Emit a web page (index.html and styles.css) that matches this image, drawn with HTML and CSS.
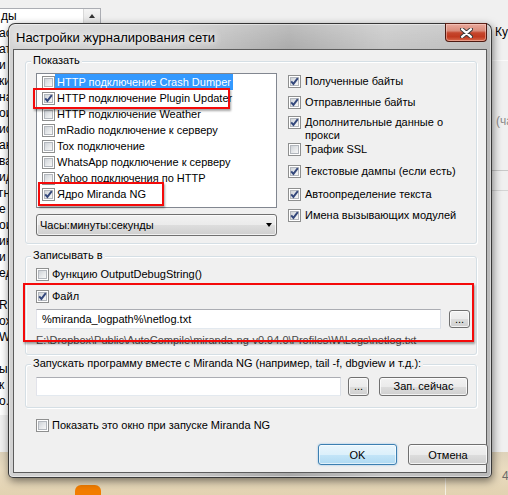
FILE: index.html
```html
<!DOCTYPE html>
<html lang="ru">
<head>
<meta charset="utf-8">
<title>Настройки журналирования сети</title>
<link rel="stylesheet" href="styles.css">
</head>
<body>
<div class="desk">
  <div class="bgtop">
    <span class="bgtop-text">ды</span>
    <span class="bgup"><i></i></span>
  </div>
  <div class="bgstrip">
    <div>ас</div><div>ат</div><div>и</div><div>ки</div><div>на</div><div>ои</div><div>ис</div><div>ан</div>
    <div>ва</div><div>ид</div><div>гн</div><div>е</div><div>ои</div><div>ин</div><div>и</div><div>ед</div>
    <div></div><div>R</div><div>ох</div><div>Wh</div><div></div><div>ы</div><div>к</div><div>о.</div>
  </div>
  <div class="bgright">
    <div class="bgr-kur">Курс</div>
    <div class="bgr-ch">(ча</div>
    <div class="bgr-line l1"></div>
    <div class="bgr-line l2"></div>
    <div class="bgr-line l3"></div>
  </div>
  <div class="bgbottom">
    <div class="bgb-orange"></div>
    <div class="bgb-vline"></div>
    <div class="bgb-four">4</div>
  </div>

  <div class="dialog">
    <div class="titlebar">
      <span class="title">Настройки журналирования сети</span>
      <div class="close">
        <svg width="13" height="10" viewBox="0 0 13 10"><path d="M2 1.2 L11 8.8 M11 1.2 L2 8.8" stroke="#3b3b3b" stroke-width="4.2" stroke-linecap="round"/><path d="M2 1.2 L11 8.8 M11 1.2 L2 8.8" stroke="#ffffff" stroke-width="2.2" stroke-linecap="round"/></svg>
      </div>
    </div>
    <div class="client">
      <div class="group g1">
        <span class="legend">Показать</span>
        <div class="leftcol">
          <div class="listbox">
            <div class="li"><span class="cb"></span><span class="lt sel">HTTP подключение Crash Dumper</span></div>
            <div class="li"><span class="cb on"><svg viewBox="0 0 13 13"><path d="M3.2 6.3 L5.4 8.9 L9.8 3.1" fill="none" stroke="#34487c" stroke-width="1.9"/></svg></span><span class="lt">HTTP подключение Plugin Updater</span></div>
            <div class="li"><span class="cb"></span><span class="lt">HTTP подключение Weather</span></div>
            <div class="li"><span class="cb"></span><span class="lt">mRadio подключение к серверу</span></div>
            <div class="li"><span class="cb"></span><span class="lt">Tox подключение</span></div>
            <div class="li"><span class="cb"></span><span class="lt">WhatsApp подключение к серверу</span></div>
            <div class="li"><span class="cb"></span><span class="lt">Yahoo подключения по HTTP</span></div>
            <div class="li"><span class="cb on"><svg viewBox="0 0 13 13"><path d="M3.2 6.3 L5.4 8.9 L9.8 3.1" fill="none" stroke="#34487c" stroke-width="1.9"/></svg></span><span class="lt">Ядро Miranda NG</span></div>
          </div>
          <div class="combo"><span>Часы:минуты:секунды</span><i class="arrow"></i></div>
        </div>
        <div class="opts">
          <div class="opt"><span class="cb on"><svg viewBox="0 0 13 13"><path d="M3.2 6.3 L5.4 8.9 L9.8 3.1" fill="none" stroke="#34487c" stroke-width="1.9"/></svg></span><span class="t">Полученные байты</span></div>
          <div class="opt"><span class="cb on"><svg viewBox="0 0 13 13"><path d="M3.2 6.3 L5.4 8.9 L9.8 3.1" fill="none" stroke="#34487c" stroke-width="1.9"/></svg></span><span class="t">Отправленные байты</span></div>
          <div class="opt"><span class="cb on"><svg viewBox="0 0 13 13"><path d="M3.2 6.3 L5.4 8.9 L9.8 3.1" fill="none" stroke="#34487c" stroke-width="1.9"/></svg></span><span class="t">Дополнительные данные о<br>прокси</span></div>
          <div class="opt"><span class="cb"></span><span class="t">Трафик SSL</span></div>
          <div class="opt"><span class="cb on"><svg viewBox="0 0 13 13"><path d="M3.2 6.3 L5.4 8.9 L9.8 3.1" fill="none" stroke="#34487c" stroke-width="1.9"/></svg></span><span class="t">Текстовые дампы (если есть)</span></div>
          <div class="opt"><span class="cb on"><svg viewBox="0 0 13 13"><path d="M3.2 6.3 L5.4 8.9 L9.8 3.1" fill="none" stroke="#34487c" stroke-width="1.9"/></svg></span><span class="t">Автоопределение текста</span></div>
          <div class="opt"><span class="cb on"><svg viewBox="0 0 13 13"><path d="M3.2 6.3 L5.4 8.9 L9.8 3.1" fill="none" stroke="#34487c" stroke-width="1.9"/></svg></span><span class="t">Имена вызывающих модулей</span></div>
        </div>
      </div>

      <div class="group g2">
        <span class="legend">Записывать в</span>
        <div class="row r1"><span class="cb"></span><span class="t">Функцию OutputDebugString()</span></div>
        <div class="row r2"><span class="cb on"><svg viewBox="0 0 13 13"><path d="M3.2 6.3 L5.4 8.9 L9.8 3.1" fill="none" stroke="#34487c" stroke-width="1.9"/></svg></span><span class="t">Файл</span></div>
        <div class="row r3"><div class="edit e1">%miranda_logpath%\netlog.txt</div><div class="btn dots">...</div></div>
        <div class="path">E:\Dropbox\Public\AutoCompile\miranda-ng-v0.94.0\Profiles\W\Logs\netlog.txt</div>
      </div>

      <div class="group g3">
        <span class="legend">Запускать программу вместе с Miranda NG (например, tail -f, dbgview и т.д.):</span>
        <div class="row r4"><div class="edit e2"></div><div class="btn dots">...</div><div class="btn run">Зап. сейчас</div></div>
      </div>

      <div class="row showrow"><span class="cb"></span><span class="t">Показать это окно при запуске Miranda NG</span></div>

      <div class="buttons">
        <div class="btn def">OK</div>
        <div class="btn cancel">Отмена</div>
      </div>
    </div>
  </div>

  <div class="mark m1"></div>
  <div class="mark m2"></div>
  <div class="mark m3"></div>
</div>
</body>
</html>
```

FILE: styles.css
```css
* { box-sizing: border-box; }
html, body { margin: 0; padding: 0; }
body {
  width: 508px; height: 495px; overflow: hidden;
  background: #f0f0f0;
  font: 11px "Liberation Sans", Arial, sans-serif;
  color: #000;
}
.desk { position: relative; width: 508px; height: 495px; overflow: hidden; background: #f0f0f0; }

/* background window pieces */
.bgtop {
  position: absolute; left: -1px; top: 8px; width: 102px; height: 40px;
  background: #fff; border: 1px solid #abadb3;
}
.bgtop-text { position: absolute; left: 1px; top: 0; line-height: 14px; font-size: 12px; }
.bgup {
  position: absolute; right: 0; top: 0; width: 17px; height: 14px;
  background: linear-gradient(#f4f4f4, #e4e4e4); border-left: 1px solid #d8d8d8;
}
.bgup i {
  position: absolute; left: 5px; top: 5px; width: 0; height: 0;
  border-left: 3.5px solid transparent; border-right: 3.5px solid transparent; border-bottom: 4px solid #333;
}
.bgstrip {
  position: absolute; left: 0; top: 25px; width: 10px; height: 390px; overflow: hidden;
  background: #fff; font-size: 12px;
}
.bgstrip div { height: 16px; line-height: 16px; margin-left: -1px; white-space: nowrap; }
.bgright { position: absolute; left: 490px; top: 0; width: 18px; height: 495px; }
.bgr-kur { position: absolute; left: 5px; top: 24px; font-size: 12px; line-height: 16px; }
.bgr-ch { position: absolute; left: 6px; top: 114px; font-size: 12px; color: #8c8c8c; line-height: 14px; }
.bgr-line { position: absolute; left: 0; width: 18px; height: 1px; }
.bgr-line.l1 { top: 60px; background: #fafafa; }
.bgr-line.l2 { top: 170px; background: #c8c8c8; }
.bgr-line.l3 { top: 190px; background: #d4d4d4; }
.bgbottom {
  position: absolute; left: 0; right: 0; top: 452px; bottom: 0;
  background: linear-gradient(#ded2ba, #eadcc0 40%, #e2d2b1);
}
.bgb-orange { position: absolute; left: 75px; top: 33px; width: 26px; height: 14px; border-radius: 6px 6px 0 0; background: #f27d00; }
.bgb-vline { position: absolute; left: 445px; top: 26px; width: 1px; height: 20px; background: #f6f0e4; }
.bgb-four { position: absolute; left: 502px; top: 17px; color: #6b6b6b; font-size: 12px; }

/* dialog frame */
.dialog {
  position: absolute; left: 8px; top: 23px; width: 484px; height: 455px;
  border: 1px solid rgba(30, 30, 30, 0.85);
  border-radius: 7px 7px 5px 5px;
  background:
    linear-gradient(rgba(255,255,255,0.25), rgba(255,255,255,0) 30px),
    linear-gradient(90deg, #d2d2d2 0%, #cacaca 35%, #a8a8a8 58%, #c4c4c4 78%, #b9b9b9 100%);
  box-shadow: inset 0 0 0 1px rgba(255,255,255,0.45), 1px 3px 9px rgba(0,0,0,0.5);
  padding: 0 4px 4px 4px;
  display: flex; flex-direction: column;
}
.titlebar { height: 25px; display: flex; align-items: flex-start; flex: none; }
.title {
  margin: 6px 0 0 3px; font: 13px/15px "Liberation Sans", Arial, sans-serif; color: #000;
  text-shadow: 0 0 6px #fff, 0 0 10px rgba(255,255,255,0.9), 0 0 14px rgba(255,255,255,0.7);
}
.close {
  margin-left: auto; margin-top: -1px; width: 42px; height: 19px;
  border: 1px solid #4e1a12; border-top-color: #5e2218; border-radius: 0 0 4px 4px;
  background: linear-gradient(#e9a99c 0%, #d98b7a 40%, #c5462d 52%, #c0391f 75%, #d8694c 100%);
  box-shadow: inset 0 0 0 1px rgba(255,220,210,0.45);
  display: flex; align-items: center; justify-content: center;
}
.close svg { display: block; margin-top: 0; }
.client {
  flex: 1; border: 1px solid #5c5c5c; background: #f0f0f0;
  display: flex; flex-direction: column; padding: 10px 10px 0 11px;
}

/* groups */
.group {
  position: relative; width: 452px; flex: none;
  border: 1px solid #d5dfe5; border-radius: 3px;
  box-shadow: 1px 1px 0 #fff, inset 1px 1px 0 #fff;
}
.legend {
  position: absolute; left: 5px; top: -8px; padding: 0 2px; background: #f0f0f0;
  line-height: 13px; white-space: nowrap;
}
.g1 { margin-top: 1px; height: 183px; display: flex; padding: 11px 0 0 10px; }
.g2 { margin-top: 12px; height: 99px; padding: 0 0 0 10px; }
.g3 { margin-top: 9px; height: 44px; padding: 0 0 0 10px; }

/* checkbox */
.cb {
  position: relative; flex: none; width: 13px; height: 13px;
  border: 1px solid #8e8f8f; background: #fff;
}
.cb::before {
  content: ""; position: absolute; left: 1px; top: 1px; right: 1px; bottom: 1px;
  border: 1px solid #b3b7bd;
  background: linear-gradient(135deg, #cfd3d8 0%, #e6e8ea 55%, #f7f7f7 100%);
}
.cb svg { position: absolute; left: -1px; top: -1px; width: 13px; height: 13px; }

/* listbox */
.leftcol { display: flex; flex-direction: column; width: 241px; flex: none; }
.listbox { height: 135px; border: 1px solid #828790; background: #fff; padding-left: 5px; }
.li { height: 16px; display: flex; align-items: center; }
.lt { padding: 0 2px; height: 16px; line-height: 16px; white-space: nowrap; }
.lt.sel { background: #3399ff; color: #fff; }
.combo {
  margin-top: 6px; height: 22px; position: relative;
  border: 1px solid #707070; border-radius: 3px;
  background: linear-gradient(#f2f2f2 0%, #ebebeb 50%, #dddddd 51%, #cfcfcf 100%);
  box-shadow: inset 0 0 0 1px rgba(255,255,255,0.7);
  display: flex; align-items: center; padding-left: 3px;
}
.combo .arrow {
  position: absolute; right: 4px; top: 8px; width: 0; height: 0;
  border-left: 3.5px solid transparent; border-right: 3.5px solid transparent; border-top: 4px solid #000;
}

/* options */
.opts { margin-left: 11px; display: flex; flex-direction: column; }
.opt { display: flex; align-items: flex-start; line-height: 13px; }
.opt .t { margin-left: 4px; white-space: nowrap; }
.opt:nth-child(1) { margin-top: 2px; }
.opt:nth-child(2) { margin-top: 8px; }
.opt:nth-child(3) { margin-top: 7px; }
.opt:nth-child(4) { margin-top: 1px; }
.opt:nth-child(5) { margin-top: 9px; }
.opt:nth-child(6) { margin-top: 10px; }
.opt:nth-child(7) { margin-top: 8px; }

/* rows */
.row { display: flex; align-items: center; line-height: 13px; }
.row .t { margin-left: 3px; white-space: nowrap; }
.r1 { margin-top: 11px; }
.r2 { margin-top: 9px; }
.r3 { margin-top: 6px; height: 20px; }
.r4 { margin-top: 12px; height: 19px; }
.path { margin-top: 5px; line-height: 13px; color: #4a4a4a; white-space: nowrap; }
.edit {
  height: 100%; background: #fff;
  border: 1px solid; border-color: #abadb3 #dbdfe6 #e3e9ef #e2e3ea;
  padding-left: 5px; display: flex; align-items: center; white-space: nowrap;
}
.e1 { width: 405px; }
.e2 { width: 305px; }
.btn {
  flex: none; border: 1px solid #707070; border-radius: 3px;
  background: linear-gradient(#f2f2f2 0%, #ebebeb 50%, #dddddd 51%, #cfcfcf 100%);
  box-shadow: inset 0 0 0 1px rgba(255,255,255,0.75);
  display: flex; align-items: center; justify-content: center; white-space: nowrap;
}
.r3 .dots { margin-left: 8px; width: 21px; height: 18px; }
.r4 .dots { margin-left: 7px; width: 21px; height: 19px; }
.run { margin-left: 10px; width: 89px; height: 19px; }
.showrow { margin-top: 11px; padding-left: 11px; }
.showrow .t { margin-left: 3px; }
.buttons { margin-top: 12px; display: flex; justify-content: flex-end; width: 463px; }
.buttons .btn { height: 21px; }
.btn.def {
  width: 79px; border-color: #3c7fb1;
  background: linear-gradient(#e9f5fc 0%, #dcf0fb 50%, #c4e5f8 51%, #b0daf2 100%);
  box-shadow: inset 0 0 0 1px rgba(255,255,255,0.6), 0 0 2px rgba(60,150,220,0.6);
}
.btn.cancel { width: 80px; margin-left: 11px; }

/* red annotation boxes */
.mark { position: absolute; border: 2px solid #f40a0a; box-shadow: 1px 2px 2px rgba(0,0,0,0.35); }
.m1 { left: 33px; top: 88px; width: 197px; height: 21px; }
.m2 { left: 38px; top: 182px; width: 126px; height: 24px; }
.m3 { left: 23px; top: 283px; width: 451px; height: 59px; }
```
